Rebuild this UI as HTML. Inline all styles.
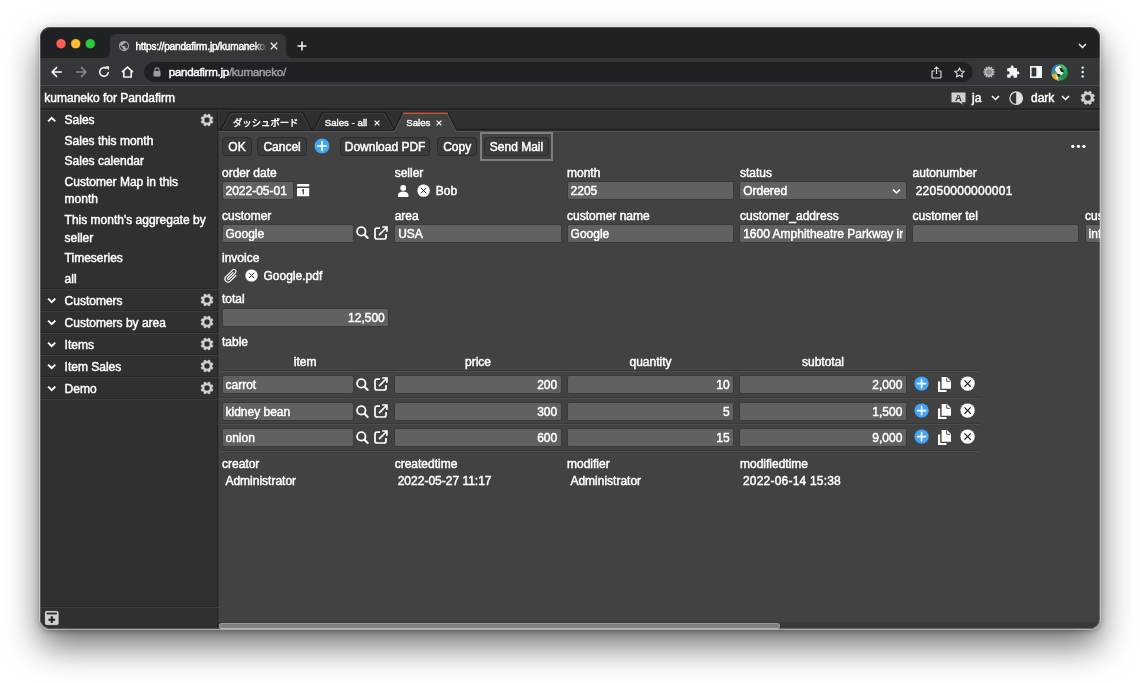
<!DOCTYPE html><html lang="en"><head><meta charset="utf-8"><title>kumaneko for Pandafirm</title><style>
*{box-sizing:border-box;margin:0;padding:0}
html,body{width:1140px;height:683px;overflow:hidden;background:#fff}
body{font-family:"Liberation Sans","Noto Sans CJK JP",sans-serif;font-size:12px;color:#fff;position:relative;-webkit-text-stroke:0.45px currentColor}
#win{will-change:transform;position:absolute;left:40px;top:27px;width:1060px;height:602px;border-radius:10px;overflow:hidden;background:#424242;}
#sh{position:absolute;left:40px;top:27px;width:1060px;height:602px;border-radius:10px;box-shadow:0 0 0 1px rgba(255,255,255,.42),0 17px 34px rgba(0,0,0,.56),0 2px 6px rgba(0,0,0,.36);}
#o{position:absolute;left:-40px;top:-27px;width:1140px;height:683px}
.a{position:absolute}
.t{position:absolute;white-space:nowrap;line-height:14px;height:14px}
.in{position:absolute;height:19px;background:#616161;border:1px solid #3a3a3a;border-radius:2.5px;overflow:hidden}
.in span{position:absolute;top:1px;line-height:14px;white-space:nowrap}
.btn{position:absolute;top:136.5px;height:19px;background:#3b3b3b;border:1px solid #2c2c2c;border-radius:3.5px;text-align:center;line-height:18.4px;white-space:nowrap}
.sep{position:absolute;height:2px;border-top:1px solid #272727;border-bottom:1px solid #3d3d3d}
.tsep{position:absolute;left:219px;width:761px;height:2px;border-top:1px solid #393939;border-bottom:1px solid #4d4d4d}
svg{position:absolute;overflow:visible}
</style></head><body>
<div id="sh"></div><div id="win"><div id="o">
<div class="a" style="left:40px;top:27px;width:1061px;height:31px;background:#202124"></div>
<div class="a" style="left:40px;top:58px;width:1061px;height:28px;background:#35363a;border-bottom:1px solid #48494c"></div>
<svg style="left:50px;top:35px" width="50" height="18" viewBox="50 35 50 18"><circle cx="61" cy="43.700" r="5" fill="#ff5f57" stroke="#1a1112" stroke-width="0.500"/><circle cx="75.700" cy="43.700" r="5" fill="#febc2e" stroke="#14130f" stroke-width="0.500"/><circle cx="90.300" cy="43.700" r="5" fill="#28c840" stroke="#101a12" stroke-width="0.500"/></svg>
<svg style="left:103px;top:34px" width="190" height="24" viewBox="0 0 190 24"><path d="M0 24 C5 24 7 22 7 17 L7 7 C7 2 9 0 14 0 L176 0 C181 0 183 2 183 7 L183 17 C183 22 185 24 190 24Z" fill="#35363a"/></svg>
<svg style="left:118px;top:40.300px" width="12" height="12" viewBox="0 0 24 24"><path fill="#a4a9ae" d="M12 2C6.48 2 2 6.48 2 12s4.480 10 10 10 10-4.480 10-10S17.520 2 12 2zm-1 17.930c-3.950-.490-7-3.850-7-7.930 0-.620.080-1.210.210-1.790L9 15v1c0 1.100.900 2 2 2v1.930zm6.900-2.540c-.260-.810-1-1.390-1.900-1.390h-1v-3c0-.550-.450-1-1-1H8v-2h2c.550 0 1-.450 1-1V7h2c1.100 0 2-.900 2-2v-.410c2.930 1.190 5 4.060 5 7.410 0 2.080-.800 3.970-2.100 5.390z"/></svg>
<div class="t" style="left:135.5px;top:39.5px;font-size:10.1px;letter-spacing:-0.2px;width:131px;overflow:hidden;-webkit-mask-image:linear-gradient(90deg,#000 90%,transparent 100%);mask-image:linear-gradient(90deg,#000 90%,transparent 100%)">https://pandafirm.jp/kumaneko/</div>
<svg style="left:269.5px;top:42px" width="8" height="8" viewBox="0 0 8 8"><path d="M0.8 0.8L7.2 7.2M7.200 0.800L0.800 7.200" stroke="#e8eaed" stroke-width="1.3" fill="none"/></svg>
<svg style="left:296.5px;top:41px" width="10" height="10" viewBox="0 0 10 10"><path d="M5 0.500V9.500M0.500 5H9.500" stroke="#f1f3f4" stroke-width="1.6" fill="none"/></svg>
<svg style="left:1078px;top:43px" width="9" height="6" viewBox="0 0 9 6"><path d="M1 1L4.500 4.500L8 1" stroke="#f1f3f4" stroke-width="1.5" fill="none"/></svg>
<svg style="left:51px;top:66px" width="12" height="12" viewBox="0 0 12 12"><path d="M11 6H1.500M6 1.200L1.200 6L6 10.800" stroke="#f1f3f4" stroke-width="1.650" fill="none"/></svg>
<svg style="left:74.5px;top:66px" width="12" height="12" viewBox="0 0 12 12"><path d="M1 6H10.500M6 1.200L10.800 6L6 10.800" stroke="#85888c" stroke-width="1.650" fill="none"/></svg>
<svg style="left:98px;top:66px" width="12" height="12" viewBox="0 0 12 12"><path d="M10.300 6A4.300 4.300 0 1 1 8.600 2.550" stroke="#f1f3f4" stroke-width="1.650" fill="none"/><path d="M7.200 0.300H11V4.300Z" fill="#f1f3f4"/></svg>
<svg style="left:121px;top:66px" width="13" height="12" viewBox="0 0 13 12"><path d="M1 6.200L6.500 1.200L12 6.200M2.800 5V11H10.200V5" stroke="#f1f3f4" stroke-width="1.650" fill="none" stroke-linejoin="miter"/></svg>
<div class="a" style="left:144px;top:62px;width:829px;height:20px;border-radius:10px;background:#202124"></div>
<svg style="left:153px;top:67px" width="8" height="10" viewBox="0 0 8 10"><rect x="0.500" y="4" width="7" height="5.600" rx="1" fill="#9aa0a6"/><path d="M2 4.500V2.800A2 2 0 0 1 6 2.800V4.500" stroke="#9aa0a6" stroke-width="1.200" fill="none"/></svg>
<div class="t" style="left:168.7px;top:65px;font-size:11.6px;letter-spacing:-0.3px"><span style="color:#fff">pandafirm.jp</span><span style="color:#9aa0a6">/kumaneko/</span></div>
<svg style="left:930.5px;top:65.5px" width="11" height="13" viewBox="0 0 11 13"><path d="M3.500 5H1.700C1.200 5 1 5.300 1 5.700V11.300C1 11.700 1.200 12 1.700 12H9.300C9.800 12 10 11.700 10 11.300V5.700C10 5.300 9.800 5 9.300 5H7.500" stroke="#dadce0" stroke-width="1.150" fill="none"/><path d="M5.500 8V1.200M3.300 3.200L5.500 1L7.700 3.200" stroke="#dadce0" stroke-width="1.150" fill="none"/></svg>
<svg style="left:953px;top:65.5px" width="13" height="13" viewBox="0 0 24 24"><path d="M12 3.500l2.600 5.700 6.200.700-4.600 4.200 1.300 6.100L12 17.100l-5.500 3.100 1.300-6.100-4.600-4.200 6.200-.700z" stroke="#dadce0" stroke-width="2.100" fill="none" stroke-linejoin="round"/></svg>
<svg style="left:982px;top:65px" width="14" height="14" viewBox="0 0 14 14"><path fill-rule="evenodd" fill="#b4b6ba" d="M6.38 1.13 L7.62 1.13 L7.74 2.36 L8.68 2.61 L9.40 1.61 L10.47 2.23 L9.96 3.35 L10.65 4.04 L11.77 3.53 L12.39 4.60 L11.39 5.32 L11.64 6.26 L12.87 6.38 L12.87 7.62 L11.64 7.74 L11.39 8.68 L12.39 9.40 L11.77 10.47 L10.65 9.96 L9.96 10.65 L10.47 11.77 L9.40 12.39 L8.68 11.39 L7.74 11.64 L7.62 12.87 L6.38 12.87 L6.26 11.64 L5.32 11.39 L4.60 12.39 L3.53 11.77 L4.04 10.65 L3.35 9.96 L2.23 10.47 L1.61 9.40 L2.61 8.68 L2.36 7.74 L1.13 7.62 L1.13 6.38 L2.36 6.26 L2.61 5.32 L1.61 4.60 L2.23 3.53 L3.35 4.04 L4.04 3.35 L3.53 2.23 L4.60 1.61 L5.32 2.61 L6.26 2.36Z M6.99 7.00 a0.01 0.01 0 1 0 0.02 0 a0.01 0.01 0 1 0 -0.02 0Z"/><circle cx="7" cy="7" r="3.300" fill="#8a8c90"/><circle cx="7" cy="7" r="3.300" fill="none" stroke="#cfd1d4" stroke-width="0.600"/></svg>
<svg style="left:1005.5px;top:65px" width="14" height="14" viewBox="0 0 24 24"><path fill="#f1f3f4" d="M20.500 11H19V7c0-1.100-.900-2-2-2h-4V3.500C13 2.120 11.880 1 10.500 1S8 2.120 8 3.500V5H4c-1.100 0-1.990.900-1.990 2v3.800H3.500c1.490 0 2.700 1.210 2.700 2.700s-1.210 2.700-2.700 2.700H2V20c0 1.100.900 2 2 2h3.800v-1.500c0-1.490 1.210-2.700 2.700-2.700 1.490 0 2.700 1.210 2.700 2.700V22H17c1.100 0 2-.900 2-2v-4h1.500c1.380 0 2.500-1.120 2.500-2.500S21.880 11 20.500 11z"/></svg>
<svg style="left:1029.5px;top:66px" width="12" height="12" viewBox="0 0 12 12"><rect x="0.800" y="0.800" width="10.400" height="10.400" fill="none" stroke="#f1f3f4" stroke-width="1.600"/><rect x="6.300" y="1" width="5" height="10" fill="#f1f3f4"/></svg>
<svg style="left:1051px;top:63.700px" width="17" height="17" viewBox="0 0 17 17"><defs><clipPath id="av"><circle cx="8.500" cy="8.500" r="8.300"/></clipPath></defs><g clip-path="url(#av)"><rect width="17" height="17" fill="#2f9e6b"/><path d="M0 0H7L3 8L0 9Z" fill="#2a7fd6"/><path d="M9 0H17V6L12 5Z" fill="#3cc45a"/><path d="M0 11L5 9L8 17H0Z" fill="#e6a93a"/><path d="M11 11L17 9V17H10Z" fill="#2d8a3f"/><path d="M5 3L9 1.500L10.500 4L9 7L12 8.500L11 11L8 10L7 15L5 14L6 9L4 6Z" fill="#f4f1e6"/><path d="M8 3.500L11 4.500L13 8L10.500 8Z" fill="#1c1c1c"/><path d="M6 9.500L9 10.500L8.500 13L6.500 12.500Z" fill="#1c1c1c"/></g></svg>
<svg style="left:1078px;top:64px" width="9" height="16" viewBox="1078 64 9 16"><circle cx="1082.700" cy="67.600" r="1.200" fill="#f1f3f4"/><circle cx="1082.700" cy="72" r="1.200" fill="#f1f3f4"/><circle cx="1082.700" cy="76.400" r="1.200" fill="#f1f3f4"/></svg>
<div class="a" style="left:40px;top:86px;width:1061px;height:24px;background:#323232;border-bottom:2px solid #232323"></div>
<div class="t" style="left:44.300px;top:91px">kumaneko for Pandafirm</div>
<svg style="left:950.5px;top:91.500px" width="15" height="13" viewBox="0 0 15 13"><path d="M0.500 0.500H14.500V10.200H10.500L12.300 12.800L8 10.200H0.500Z" fill="#cfcfcf"/><text x="7.400" y="8.600" font-size="9.500" font-weight="bold" text-anchor="middle" fill="#303030" font-family="Liberation Sans,sans-serif">A</text></svg>
<div class="t" style="left:972px;top:91px">ja</div>
<svg style="left:990.500px;top:95px" width="9" height="6" viewBox="0 0 9 6"><path d="M1 1L4.500 4.500L8 1" stroke="#fff" stroke-width="1.500" fill="none"/></svg>
<svg style="left:1009.200px;top:90.500px" width="14.400" height="14.400" viewBox="0 0 16 16"><circle cx="8" cy="8" r="7" fill="none" stroke="#e0e0e0" stroke-width="1.400"/><path d="M8 1A7 7 0 0 1 8 15Z" fill="#e0e0e0"/></svg>
<div class="t" style="left:1031px;top:91px">dark</div>
<svg style="left:1061px;top:95px" width="9" height="6" viewBox="0 0 9 6"><path d="M1 1L4.500 4.500L8 1" stroke="#fff" stroke-width="1.500" fill="none"/></svg>
<svg style="left:1078.600px;top:89.300px" width="17.600" height="17.600" viewBox="0 0 16 16"><path fill-rule="evenodd" fill="#d6d6d6" stroke="#d6d6d6" stroke-width="0.500" stroke-linejoin="round" d="M9.40 1.96 L11.28 2.74 L10.91 4.06 L11.94 5.09 L13.26 4.72 L14.04 6.60 L12.85 7.27 L12.85 8.73 L14.04 9.40 L13.26 11.28 L11.94 10.91 L10.91 11.94 L11.28 13.26 L9.40 14.04 L8.73 12.85 L7.27 12.85 L6.60 14.04 L4.72 13.26 L5.09 11.94 L4.06 10.91 L2.74 11.28 L1.96 9.40 L3.15 8.73 L3.15 7.27 L1.96 6.60 L2.74 4.72 L4.06 5.09 L5.09 4.06 L4.72 2.74 L6.60 1.96 L7.27 3.15 L8.73 3.15Z M5.00 8.00 a3.00 3.00 0 1 0 6.00 0 a3.00 3.00 0 1 0 -6.00 0Z"/></svg>
<div class="a" style="left:40px;top:110px;width:177.500px;height:520px;background:#303030;border-top:1px solid #3b3b3b"></div>
<div class="a" style="left:217px;top:109px;width:1px;height:521px;background:#252525"></div><div class="a" style="left:218px;top:109px;width:1px;height:521px;background:#363636"></div>
<svg style="left:46.8px;top:116.3px" width="9.400" height="7" viewBox="0 0 9.400 7"><path d="M1.100 5.400L4.700 1.800L8.300 5.400" stroke="#fff" stroke-width="1.900" fill="none"/></svg>
<div class="t" style="left:64.6px;top:113px;">Sales</div>
<svg style="left:199.2px;top:111.5px" width="16.0" height="16.0" viewBox="0 0 16 16"><path fill-rule="evenodd" fill="#d4d4d4" stroke-linejoin="round" stroke="#d4d4d4" stroke-width="0.500" d="M9.40 1.96 L11.28 2.74 L10.91 4.06 L11.94 5.09 L13.26 4.72 L14.04 6.60 L12.85 7.27 L12.85 8.73 L14.04 9.40 L13.26 11.28 L11.94 10.91 L10.91 11.94 L11.28 13.26 L9.40 14.04 L8.73 12.85 L7.27 12.85 L6.60 14.04 L4.72 13.26 L5.09 11.94 L4.06 10.91 L2.74 11.28 L1.96 9.40 L3.15 8.73 L3.15 7.27 L1.96 6.60 L2.74 4.72 L4.06 5.09 L5.09 4.06 L4.72 2.74 L6.60 1.96 L7.27 3.15 L8.73 3.15Z M5.00 8.00 a3.00 3.00 0 1 0 6.00 0 a3.00 3.00 0 1 0 -6.00 0Z"/></svg>
<div class="t" style="left:64.6px;top:134px;">Sales this month</div>
<div class="t" style="left:64.6px;top:154px;">Sales calendar</div>
<div class="t" style="left:64.6px;top:175px;">Customer Map in this</div>
<div class="t" style="left:64.6px;top:192px;">month</div>
<div class="t" style="left:64.6px;top:213px;">This month's aggregate by</div>
<div class="t" style="left:64.6px;top:231px;">seller</div>
<div class="t" style="left:64.6px;top:251px;">Timeseries</div>
<div class="t" style="left:64.6px;top:272px;">all</div>
<div class="sep" style="left:40px;top:288.3px;width:177.500px"></div>
<svg style="left:46.8px;top:297.0px" width="9.400" height="7" viewBox="0 0 9.400 7"><path d="M1.100 1.600L4.700 5.200L8.300 1.600" stroke="#fff" stroke-width="1.900" fill="none"/></svg>
<div class="t" style="left:64.6px;top:294px;">Customers</div>
<svg style="left:199.2px;top:292.3px" width="16.0" height="16.0" viewBox="0 0 16 16"><path fill-rule="evenodd" fill="#d4d4d4" stroke-linejoin="round" stroke="#d4d4d4" stroke-width="0.500" d="M9.40 1.96 L11.28 2.74 L10.91 4.06 L11.94 5.09 L13.26 4.72 L14.04 6.60 L12.85 7.27 L12.85 8.73 L14.04 9.40 L13.26 11.28 L11.94 10.91 L10.91 11.94 L11.28 13.26 L9.40 14.04 L8.73 12.85 L7.27 12.85 L6.60 14.04 L4.72 13.26 L5.09 11.94 L4.06 10.91 L2.74 11.28 L1.96 9.40 L3.15 8.73 L3.15 7.27 L1.96 6.60 L2.74 4.72 L4.06 5.09 L5.09 4.06 L4.72 2.74 L6.60 1.96 L7.27 3.15 L8.73 3.15Z M5.00 8.00 a3.00 3.00 0 1 0 6.00 0 a3.00 3.00 0 1 0 -6.00 0Z"/></svg>
<div class="sep" style="left:40px;top:310.3px;width:177.500px"></div>
<svg style="left:46.8px;top:319.0px" width="9.400" height="7" viewBox="0 0 9.400 7"><path d="M1.100 1.600L4.700 5.200L8.300 1.600" stroke="#fff" stroke-width="1.900" fill="none"/></svg>
<div class="t" style="left:64.6px;top:316px;">Customers by area</div>
<svg style="left:199.2px;top:314.3px" width="16.0" height="16.0" viewBox="0 0 16 16"><path fill-rule="evenodd" fill="#d4d4d4" stroke-linejoin="round" stroke="#d4d4d4" stroke-width="0.500" d="M9.40 1.96 L11.28 2.74 L10.91 4.06 L11.94 5.09 L13.26 4.72 L14.04 6.60 L12.85 7.27 L12.85 8.73 L14.04 9.40 L13.26 11.28 L11.94 10.91 L10.91 11.94 L11.28 13.26 L9.40 14.04 L8.73 12.85 L7.27 12.85 L6.60 14.04 L4.72 13.26 L5.09 11.94 L4.06 10.91 L2.74 11.28 L1.96 9.40 L3.15 8.73 L3.15 7.27 L1.96 6.60 L2.74 4.72 L4.06 5.09 L5.09 4.06 L4.72 2.74 L6.60 1.96 L7.27 3.15 L8.73 3.15Z M5.00 8.00 a3.00 3.00 0 1 0 6.00 0 a3.00 3.00 0 1 0 -6.00 0Z"/></svg>
<div class="sep" style="left:40px;top:332.3px;width:177.500px"></div>
<svg style="left:46.8px;top:341.0px" width="9.400" height="7" viewBox="0 0 9.400 7"><path d="M1.100 1.600L4.700 5.200L8.300 1.600" stroke="#fff" stroke-width="1.900" fill="none"/></svg>
<div class="t" style="left:64.6px;top:338px;">Items</div>
<svg style="left:199.2px;top:336.3px" width="16.0" height="16.0" viewBox="0 0 16 16"><path fill-rule="evenodd" fill="#d4d4d4" stroke-linejoin="round" stroke="#d4d4d4" stroke-width="0.500" d="M9.40 1.96 L11.28 2.74 L10.91 4.06 L11.94 5.09 L13.26 4.72 L14.04 6.60 L12.85 7.27 L12.85 8.73 L14.04 9.40 L13.26 11.28 L11.94 10.91 L10.91 11.94 L11.28 13.26 L9.40 14.04 L8.73 12.85 L7.27 12.85 L6.60 14.04 L4.72 13.26 L5.09 11.94 L4.06 10.91 L2.74 11.28 L1.96 9.40 L3.15 8.73 L3.15 7.27 L1.96 6.60 L2.74 4.72 L4.06 5.09 L5.09 4.06 L4.72 2.74 L6.60 1.96 L7.27 3.15 L8.73 3.15Z M5.00 8.00 a3.00 3.00 0 1 0 6.00 0 a3.00 3.00 0 1 0 -6.00 0Z"/></svg>
<div class="sep" style="left:40px;top:354.3px;width:177.500px"></div>
<svg style="left:46.8px;top:363.0px" width="9.400" height="7" viewBox="0 0 9.400 7"><path d="M1.100 1.600L4.700 5.200L8.300 1.600" stroke="#fff" stroke-width="1.900" fill="none"/></svg>
<div class="t" style="left:64.6px;top:360px;">Item Sales</div>
<svg style="left:199.2px;top:358.3px" width="16.0" height="16.0" viewBox="0 0 16 16"><path fill-rule="evenodd" fill="#d4d4d4" stroke-linejoin="round" stroke="#d4d4d4" stroke-width="0.500" d="M9.40 1.96 L11.28 2.74 L10.91 4.06 L11.94 5.09 L13.26 4.72 L14.04 6.60 L12.85 7.27 L12.85 8.73 L14.04 9.40 L13.26 11.28 L11.94 10.91 L10.91 11.94 L11.28 13.26 L9.40 14.04 L8.73 12.85 L7.27 12.85 L6.60 14.04 L4.72 13.26 L5.09 11.94 L4.06 10.91 L2.74 11.28 L1.96 9.40 L3.15 8.73 L3.15 7.27 L1.96 6.60 L2.74 4.72 L4.06 5.09 L5.09 4.06 L4.72 2.74 L6.60 1.96 L7.27 3.15 L8.73 3.15Z M5.00 8.00 a3.00 3.00 0 1 0 6.00 0 a3.00 3.00 0 1 0 -6.00 0Z"/></svg>
<div class="sep" style="left:40px;top:376.3px;width:177.500px"></div>
<svg style="left:46.8px;top:385.0px" width="9.400" height="7" viewBox="0 0 9.400 7"><path d="M1.100 1.600L4.700 5.200L8.300 1.600" stroke="#fff" stroke-width="1.900" fill="none"/></svg>
<div class="t" style="left:64.6px;top:382px;">Demo</div>
<svg style="left:199.2px;top:380.3px" width="16.0" height="16.0" viewBox="0 0 16 16"><path fill-rule="evenodd" fill="#d4d4d4" stroke-linejoin="round" stroke="#d4d4d4" stroke-width="0.500" d="M9.40 1.96 L11.28 2.74 L10.91 4.06 L11.94 5.09 L13.26 4.72 L14.04 6.60 L12.85 7.27 L12.85 8.73 L14.04 9.40 L13.26 11.28 L11.94 10.91 L10.91 11.94 L11.28 13.26 L9.40 14.04 L8.73 12.85 L7.27 12.85 L6.60 14.04 L4.72 13.26 L5.09 11.94 L4.06 10.91 L2.74 11.28 L1.96 9.40 L3.15 8.73 L3.15 7.27 L1.96 6.60 L2.74 4.72 L4.06 5.09 L5.09 4.06 L4.72 2.74 L6.60 1.96 L7.27 3.15 L8.73 3.15Z M5.00 8.00 a3.00 3.00 0 1 0 6.00 0 a3.00 3.00 0 1 0 -6.00 0Z"/></svg>
<div class="sep" style="left:40px;top:398.3px;width:177.500px"></div>
<div class="sep" style="left:40px;top:606px;width:177.500px"></div>
<svg style="left:45px;top:611px" width="13.500" height="14" viewBox="0 0 13.500 14"><rect x="0.400" y="0.400" width="12.700" height="13.200" rx="1.300" fill="#cfcfcf" stroke="#e6e6e6" stroke-width="0.800"/><rect x="1.600" y="1.600" width="10.300" height="1.800" fill="#2a2a2a"/><path d="M6.750 5.300V12M3.400 8.650H10.100" stroke="#1e1e1e" stroke-width="2"/></svg>
<div class="a" style="left:218.700px;top:110px;width:883px;height:21px;background:#303030;border-top:1px solid #383838"></div>
<div class="a" style="left:219px;top:131px;width:882px;height:1px;background:#555"></div>
<svg style="left:0;top:0" width="1140" height="140" viewBox="0 0 1140 140"><rect x="218.500" y="128.700" width="882" height="1.800" fill="#212121"/><polygon points="221.10,129.70 229.90,112.40 303.00,112.40 311.20,129.70" fill="#2f2f2f"/><polyline points="221.10,129.70 229.90,112.40 303.00,112.40 311.20,129.70" fill="none" stroke="#1f1f1f" stroke-width="1.300"/><polyline points="222.60,128.90 231.30,113.40 301.60,113.40 309.70,128.90" fill="none" stroke="#444" stroke-width="0.900"/><polygon points="313.90,129.70 322.30,112.40 385.50,112.40 393.90,129.70" fill="#2f2f2f"/><polyline points="313.90,129.70 322.30,112.40 385.50,112.40 393.90,129.70" fill="none" stroke="#1f1f1f" stroke-width="1.300"/><polyline points="315.40,128.90 323.70,113.40 384.10,113.40 392.40,128.90" fill="none" stroke="#444" stroke-width="0.900"/><polygon points="393.20,132.00 402.60,112.40 448.10,112.40 457.40,132.00" fill="#424242"/><polyline points="394.30,129.70 402.60,112.40 448.10,112.40 456.30,129.70" fill="none" stroke="#1f1f1f" stroke-width="1.300"/><polyline points="394.41,131.60 404.00,113.40 446.70,113.40 456.19,131.60" fill="none" stroke="#565656" stroke-width="0.900"/><path d="M402.90 113.30H447.80" stroke="#bf5a32" stroke-width="1.600"/></svg>
<div class="t" style="left:233.0px;top:115.5px;font-size:9.350px;-webkit-text-stroke-width:0.35px">ダッシュボード</div>
<div class="t" style="left:324.7px;top:115.5px;font-size:9.700px;-webkit-text-stroke-width:0.35px">Sales - all</div>
<div class="t" style="left:406.2px;top:115.5px;font-size:9.700px;-webkit-text-stroke-width:0.35px">Sales</div>
<svg style="left:373.8px;top:119.6px" width="6" height="6" viewBox="0 0 6 6"><path d="M0.600 0.600L5.400 5.400M5.400 0.600L0.600 5.400" stroke="#fff" stroke-width="1.200" fill="none"/></svg>
<svg style="left:435.7px;top:119.6px" width="6" height="6" viewBox="0 0 6 6"><path d="M0.600 0.600L5.400 5.400M5.400 0.600L0.600 5.400" stroke="#fff" stroke-width="1.200" fill="none"/></svg>
<div class="btn" style="left:222.0px;width:30.0px">OK</div>
<div class="btn" style="left:257.2px;width:49.8px">Cancel</div>
<div class="btn" style="left:339.8px;width:90.6px">Download PDF</div>
<div class="btn" style="left:437.0px;width:40.3px">Copy</div>
<div class="btn" style="left:484.4px;width:64.2px">Send Mail</div>
<div class="a" style="left:480px;top:132px;width:73px;height:29px;border:2px solid #7e7e7e"></div>
<svg style="left:313.9px;top:138.1px" width="16.0" height="16.0" viewBox="0 0 16 16"><circle cx="8" cy="8" r="7.800" fill="#42a5f5" stroke="#3a2a22" stroke-width="0.400"/><path d="M8 3.700V12.300M3.700 8H12.300" stroke="#fff" stroke-width="1.700" fill="none" stroke-linecap="round"/></svg>
<svg style="left:1068px;top:142px" width="20" height="9" viewBox="1068 142 20 9"><circle cx="1072.800" cy="146.300" r="1.650" fill="#fff"/><circle cx="1078.400" cy="146.300" r="1.650" fill="#fff"/><circle cx="1083.900" cy="146.300" r="1.650" fill="#fff"/></svg>
<div class="t" style="left:222.0px;top:166px;">order date</div>
<div class="in" style="left:221.6px;top:181px;width:72.6px"></div>
<div class="t" style="left:225.5px;top:184px;width:65.2px;overflow:hidden">2022-05-01</div>
<svg style="left:296.800px;top:184.200px" width="12.200" height="12.300" viewBox="0 0 12.200 12.300"><rect x="0" y="0" width="12.200" height="2.600" rx="0.500" fill="#fff"/><rect x="0" y="3.900" width="12.200" height="8.400" rx="0.500" fill="#fff"/><path d="M5 6.800L6.300 5.900V10.200" stroke="#2a2a2a" stroke-width="1.100" fill="none"/></svg>
<div class="t" style="left:394.7px;top:166px;">seller</div>
<svg style="left:398.200px;top:184.800px" width="10.400" height="12" viewBox="0 0 10.400 12"><circle cx="5.200" cy="2.900" r="2.900" fill="#fff"/><path d="M0 12V10.200C0 7.800 2.300 6.600 5.200 6.600C8.100 6.600 10.400 7.800 10.400 10.200V12Z" fill="#fff"/></svg>
<svg style="left:417.4px;top:184.1px" width="13.2" height="13.2" viewBox="0 0 16 16"><circle cx="8" cy="8" r="7.800" fill="#fff" stroke="#2a2a2a" stroke-width="0.400"/><path d="M4.700 4.700L11.300 11.300M11.300 4.700L4.700 11.300" stroke="#1f1f1f" stroke-width="1.200" fill="none"/></svg>
<div class="t" style="left:435.8px;top:184px;">Bob</div>
<div class="t" style="left:567.0px;top:166px;">month</div>
<div class="in" style="left:566.7px;top:181px;width:167.4px"></div>
<div class="t" style="left:570.6px;top:184px;width:160.0px;overflow:hidden">2205</div>
<div class="t" style="left:740.0px;top:166px;">status</div>
<div class="in" style="left:739.3px;top:181px;width:167.6px"></div>
<div class="t" style="left:743.2px;top:184px;width:160.2px;overflow:hidden">Ordered</div>
<svg style="left:892px;top:188.300px" width="9" height="6.500" viewBox="0 0 9 6.500"><path d="M1 1.500L4.500 5L8 1.500" stroke="#fff" stroke-width="1.500" fill="none"/></svg>
<div class="t" style="left:912.6px;top:166px;">autonumber</div>
<div class="t" style="left:915.7px;top:184px;letter-spacing:0.250px">22050000000001</div>
<div class="t" style="left:222.0px;top:209px;">customer</div>
<div class="in" style="left:221.6px;top:224px;width:132.1px"></div>
<div class="t" style="left:225.5px;top:227px;width:124.7px;overflow:hidden">Google</div>
<svg style="left:356.3px;top:226.4px" width="13" height="13" viewBox="0 0 13 13"><circle cx="5.300" cy="5.400" r="4.200" fill="none" stroke="#fff" stroke-width="1.800"/><path d="M8.500 8.700L11.700 12" stroke="#fff" stroke-width="2" stroke-linecap="round"/></svg>
<svg style="left:373.5px;top:225.6px" width="14" height="14" viewBox="0 0 14 14"><path d="M6 2.200H3Q1 2.200 1 4.200V11Q1 13 3 13H10Q12 13 12 11V8" fill="none" stroke="#fff" stroke-width="1.700"/><path d="M5 9.100L12 2M8.200 1H12.900V5.700" fill="none" stroke="#fff" stroke-width="1.700"/></svg>
<div class="t" style="left:394.7px;top:209px;">area</div>
<div class="in" style="left:394.3px;top:224px;width:167.4px"></div>
<div class="t" style="left:398.2px;top:227px;width:160.0px;overflow:hidden">USA</div>
<div class="t" style="left:567.0px;top:209px;">customer name</div>
<div class="in" style="left:566.7px;top:224px;width:167.4px"></div>
<div class="t" style="left:570.6px;top:227px;width:160.0px;overflow:hidden">Google</div>
<div class="t" style="left:740.0px;top:209px;">customer_address</div>
<div class="in" style="left:739.3px;top:224px;width:167.6px"></div>
<div class="t" style="left:743.2px;top:227px;width:160.2px;overflow:hidden">1600 Amphitheatre Parkway ir</div>
<div class="t" style="left:912.6px;top:209px;">customer tel</div>
<div class="in" style="left:911.9px;top:224px;width:167.2px"></div>
<div class="t" style="left:1085.0px;top:209px;">customer fax</div>
<div class="in" style="left:1084.7px;top:224px;width:167.0px"></div>
<div class="t" style="left:1088.6px;top:227px;width:159.6px;overflow:hidden">info@example.com</div>
<div class="t" style="left:222.0px;top:251px;">invoice</div>
<svg style="left:223.800px;top:268.700px" width="14" height="14" viewBox="-7 -7 14 14"><g transform="rotate(45)"><path d="M3.100 -3.800V4.100a3.100 3.100 0 0 1 -6.200 0V-5.300a2.050 2.050 0 0 1 4.100 0V3.500a1 1 0 0 1 -2 0V-3.800" fill="none" stroke="#fff" stroke-width="1.150" stroke-linecap="round"/></g></svg>
<svg style="left:244.9px;top:268.9px" width="13.0" height="13.0" viewBox="0 0 16 16"><circle cx="8" cy="8" r="7.800" fill="#fff" stroke="#2a2a2a" stroke-width="0.400"/><path d="M4.700 4.700L11.300 11.300M11.300 4.700L4.700 11.300" stroke="#1f1f1f" stroke-width="1.200" fill="none"/></svg>
<div class="t" style="left:263.5px;top:269px;">Google.pdf</div>
<div class="t" style="left:222.0px;top:292px;">total</div>
<div class="in" style="left:221.6px;top:308px;width:167.7px"></div>
<div class="t" style="left:222.3px;top:311px;width:162.5px;text-align:right">12,500</div>
<div class="t" style="left:222.0px;top:335px;">table</div>
<div class="t" style="left:255.2px;top:355px;width:100px;text-align:center">item</div>
<div class="t" style="left:428.0px;top:355px;width:100px;text-align:center">price</div>
<div class="t" style="left:600.5px;top:355px;width:100px;text-align:center">quantity</div>
<div class="t" style="left:773.0px;top:355px;width:100px;text-align:center">subtotal</div>
<div class="tsep" style="top:370.4px"></div>
<div class="in" style="left:221.6px;top:375px;width:132.1px"></div>
<div class="t" style="left:225.5px;top:378px;width:124.7px;overflow:hidden">carrot</div>
<svg style="left:356.3px;top:378.0px" width="13" height="13" viewBox="0 0 13 13"><circle cx="5.300" cy="5.400" r="4.200" fill="none" stroke="#fff" stroke-width="1.800"/><path d="M8.500 8.700L11.700 12" stroke="#fff" stroke-width="2" stroke-linecap="round"/></svg>
<svg style="left:373.5px;top:377.2px" width="14" height="14" viewBox="0 0 14 14"><path d="M6 2.200H3Q1 2.200 1 4.200V11Q1 13 3 13H10Q12 13 12 11V8" fill="none" stroke="#fff" stroke-width="1.700"/><path d="M5 9.100L12 2M8.200 1H12.900V5.700" fill="none" stroke="#fff" stroke-width="1.700"/></svg>
<div class="in" style="left:394.3px;top:375px;width:167.4px"></div>
<div class="t" style="left:395.0px;top:378px;width:162.2px;text-align:right">200</div>
<div class="in" style="left:566.7px;top:375px;width:167.4px"></div>
<div class="t" style="left:567.4px;top:378px;width:162.2px;text-align:right">10</div>
<div class="in" style="left:739.3px;top:375px;width:167.6px"></div>
<div class="t" style="left:740.0px;top:378px;width:162.4px;text-align:right">2,000</div>
<svg style="left:913.5px;top:376.4px" width="15.2" height="15.2" viewBox="0 0 16 16"><circle cx="8" cy="8" r="7.800" fill="#42a5f5" stroke="#3a2a22" stroke-width="0.400"/><path d="M8 3.700V12.300M3.700 8H12.300" stroke="#fff" stroke-width="1.700" fill="none" stroke-linecap="round"/></svg>
<svg style="left:938px;top:376.7px" width="13" height="15" viewBox="0 0 13 15"><path d="M0 4.500H2.200V13H8.500V15H0Z" fill="#fff"/><path d="M3.600 0H9L13 4V11.800H3.600Z" fill="#fff"/><path d="M8.700 0.600V4.300H12.400" fill="none" stroke="#424242" stroke-width="0.900"/></svg>
<svg style="left:960.4px;top:376.4px" width="15.2" height="15.2" viewBox="0 0 16 16"><circle cx="8" cy="8" r="7.800" fill="#fff" stroke="#2a2a2a" stroke-width="0.400"/><path d="M4.700 4.700L11.300 11.300M11.300 4.700L4.700 11.300" stroke="#1f1f1f" stroke-width="1.200" fill="none"/></svg>
<div class="tsep" style="top:396.9px"></div>
<div class="in" style="left:221.6px;top:402px;width:132.1px"></div>
<div class="t" style="left:225.5px;top:405px;width:124.7px;overflow:hidden">kidney bean</div>
<svg style="left:356.3px;top:404.8px" width="13" height="13" viewBox="0 0 13 13"><circle cx="5.300" cy="5.400" r="4.200" fill="none" stroke="#fff" stroke-width="1.800"/><path d="M8.500 8.700L11.700 12" stroke="#fff" stroke-width="2" stroke-linecap="round"/></svg>
<svg style="left:373.5px;top:404.0px" width="14" height="14" viewBox="0 0 14 14"><path d="M6 2.200H3Q1 2.200 1 4.200V11Q1 13 3 13H10Q12 13 12 11V8" fill="none" stroke="#fff" stroke-width="1.700"/><path d="M5 9.100L12 2M8.200 1H12.900V5.700" fill="none" stroke="#fff" stroke-width="1.700"/></svg>
<div class="in" style="left:394.3px;top:402px;width:167.4px"></div>
<div class="t" style="left:395.0px;top:405px;width:162.2px;text-align:right">300</div>
<div class="in" style="left:566.7px;top:402px;width:167.4px"></div>
<div class="t" style="left:567.4px;top:405px;width:162.2px;text-align:right">5</div>
<div class="in" style="left:739.3px;top:402px;width:167.6px"></div>
<div class="t" style="left:740.0px;top:405px;width:162.4px;text-align:right">1,500</div>
<svg style="left:913.5px;top:403.2px" width="15.2" height="15.2" viewBox="0 0 16 16"><circle cx="8" cy="8" r="7.800" fill="#42a5f5" stroke="#3a2a22" stroke-width="0.400"/><path d="M8 3.700V12.300M3.700 8H12.300" stroke="#fff" stroke-width="1.700" fill="none" stroke-linecap="round"/></svg>
<svg style="left:938px;top:403.5px" width="13" height="15" viewBox="0 0 13 15"><path d="M0 4.500H2.200V13H8.500V15H0Z" fill="#fff"/><path d="M3.600 0H9L13 4V11.800H3.600Z" fill="#fff"/><path d="M8.700 0.600V4.300H12.400" fill="none" stroke="#424242" stroke-width="0.900"/></svg>
<svg style="left:960.4px;top:403.2px" width="15.2" height="15.2" viewBox="0 0 16 16"><circle cx="8" cy="8" r="7.800" fill="#fff" stroke="#2a2a2a" stroke-width="0.400"/><path d="M4.700 4.700L11.300 11.300M11.300 4.700L4.700 11.300" stroke="#1f1f1f" stroke-width="1.200" fill="none"/></svg>
<div class="tsep" style="top:423.4px"></div>
<div class="in" style="left:221.6px;top:428px;width:132.1px"></div>
<div class="t" style="left:225.5px;top:431px;width:124.7px;overflow:hidden">onion</div>
<svg style="left:356.3px;top:431.0px" width="13" height="13" viewBox="0 0 13 13"><circle cx="5.300" cy="5.400" r="4.200" fill="none" stroke="#fff" stroke-width="1.800"/><path d="M8.500 8.700L11.700 12" stroke="#fff" stroke-width="2" stroke-linecap="round"/></svg>
<svg style="left:373.5px;top:430.2px" width="14" height="14" viewBox="0 0 14 14"><path d="M6 2.200H3Q1 2.200 1 4.200V11Q1 13 3 13H10Q12 13 12 11V8" fill="none" stroke="#fff" stroke-width="1.700"/><path d="M5 9.100L12 2M8.200 1H12.900V5.700" fill="none" stroke="#fff" stroke-width="1.700"/></svg>
<div class="in" style="left:394.3px;top:428px;width:167.4px"></div>
<div class="t" style="left:395.0px;top:431px;width:162.2px;text-align:right">600</div>
<div class="in" style="left:566.7px;top:428px;width:167.4px"></div>
<div class="t" style="left:567.4px;top:431px;width:162.2px;text-align:right">15</div>
<div class="in" style="left:739.3px;top:428px;width:167.6px"></div>
<div class="t" style="left:740.0px;top:431px;width:162.4px;text-align:right">9,000</div>
<svg style="left:913.5px;top:429.4px" width="15.2" height="15.2" viewBox="0 0 16 16"><circle cx="8" cy="8" r="7.800" fill="#42a5f5" stroke="#3a2a22" stroke-width="0.400"/><path d="M8 3.700V12.300M3.700 8H12.300" stroke="#fff" stroke-width="1.700" fill="none" stroke-linecap="round"/></svg>
<svg style="left:938px;top:429.7px" width="13" height="15" viewBox="0 0 13 15"><path d="M0 4.500H2.200V13H8.500V15H0Z" fill="#fff"/><path d="M3.600 0H9L13 4V11.800H3.600Z" fill="#fff"/><path d="M8.700 0.600V4.300H12.400" fill="none" stroke="#424242" stroke-width="0.900"/></svg>
<svg style="left:960.4px;top:429.4px" width="15.2" height="15.2" viewBox="0 0 16 16"><circle cx="8" cy="8" r="7.800" fill="#fff" stroke="#2a2a2a" stroke-width="0.400"/><path d="M4.700 4.700L11.300 11.300M11.300 4.700L4.700 11.300" stroke="#1f1f1f" stroke-width="1.200" fill="none"/></svg>
<div class="tsep" style="top:449.9px"></div>
<div class="t" style="left:222.0px;top:457px;">creator</div>
<div class="t" style="left:225.4px;top:474px;">Administrator</div>
<div class="t" style="left:394.7px;top:457px;">createdtime</div>
<div class="t" style="left:397.7px;top:474px;">2022-05-27 11:17</div>
<div class="t" style="left:567.0px;top:457px;">modifier</div>
<div class="t" style="left:570.4px;top:474px;">Administrator</div>
<div class="t" style="left:740.0px;top:457px;">modifiedtime</div>
<div class="t" style="left:743.0px;top:474px;letter-spacing:0.200px">2022-06-14 15:38</div>
<div class="a" style="left:219px;top:622px;width:882px;height:8px;background:#393939;border-bottom:2px solid #484848"></div>
<div class="a" style="left:219px;top:622.500px;width:561px;height:6px;border-radius:3px;background:#808080;border:0.500px solid #999;border-bottom:1px solid #a6a6a6"></div>
</div></div>
<div class="a" style="left:40px;top:27px;width:1060px;height:602px;border-radius:10px;box-shadow:inset 0 0 0 1px rgba(255,255,255,.2);pointer-events:none"></div>
</body></html>
